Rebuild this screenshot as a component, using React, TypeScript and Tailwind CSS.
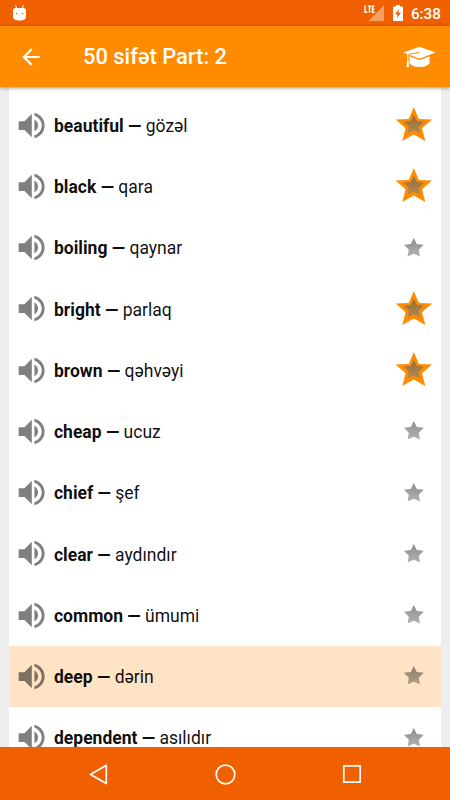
import React, { useState } from 'react';

interface Word {
  id: number;
  term: string;
  translation: string;
  starred: boolean;
}

const initialWords: Word[] = [
  { id: 1, term: 'beautiful', translation: 'gözəl', starred: true },
  { id: 2, term: 'black', translation: 'qara', starred: true },
  { id: 3, term: 'boiling', translation: 'qaynar', starred: false },
  { id: 4, term: 'bright', translation: 'parlaq', starred: true },
  { id: 5, term: 'brown', translation: 'qəhvəyi', starred: true },
  { id: 6, term: 'cheap', translation: 'ucuz', starred: false },
  { id: 7, term: 'chief', translation: 'şef', starred: false },
  { id: 8, term: 'clear', translation: 'aydındır', starred: false },
  { id: 9, term: 'common', translation: 'ümumi', starred: false },
  { id: 10, term: 'deep', translation: 'dərin', starred: false },
  { id: 11, term: 'dependent', translation: 'asılıdır', starred: false },
];

function StatusBar() {
  return (
    <div className="flex h-[26px] shrink-0 items-center bg-[#f06000] pl-[13px] pr-[9px]">
      <svg className="h-4 w-[13px]" viewBox="0 0 13 16" fill="none">
        <path d="M3.6 3.5L2.8.8M9.4 3.5l.8-2.7" stroke="#fff" strokeWidth="1" strokeLinecap="round" />
        <path d="M2.5 3h8c1.500 0 2.500 1 2.500 2.500V12c0 2.500-3 3.500-6.500 3.500S0 14.500 0 12V5.500C0 4 1 3 2.500 3z" fill="#fff" />
        <circle cx="3.700" cy="8.800" r=".8" fill="#f06000" />
        <circle cx="9.300" cy="8.800" r=".8" fill="#f06000" />
      </svg>
      <svg className="ml-auto h-4 w-5" viewBox="0 0 20 16">
        <path d="M20 0v16H4.500z" fill="#f7a066" />
        <path d="M0 0h11v8.500H0z" fill="#f06000" />
        <path d="M1 .5v6.700h2.400M3.800 1.100h3.400M5.500 1.100v6.700M10.600 1.100H8.400v6.100h2.200M8.400 4.200h2" stroke="#fff" strokeWidth="1.400" fill="none" />
      </svg>
      <svg className="ml-[9px] h-4 w-[10px]" viewBox="0 0 10 16">
        <path d="M3 0h4v1.500h2.200c.5 0 .8.300.8.800v12.900c0 .5-.3.800-.8.800H.8c-.5 0-.8-.3-.8-.8V2.300c0-.5.300-.8.800-.8H3z" fill="#fff" />
        <path d="M6 4L2 9.300h2.400L3.800 13.300 8 7.800H5.500z" fill="#f06000" />
      </svg>
      <span className="ml-2 pt-[3px] text-[15.300px] font-medium leading-none text-white">6:38</span>
    </div>
  );
}

function SpeakerIcon() {
  return (
    <svg className="h-[35px] w-[35px]" viewBox="0 0 24 24" fill="currentColor">
      <path d="M3.200 9v6h4l5 5V4l-5 5h-4zm13.300 3c0-1.770-1.020-3.290-2.500-4.030v8.050c1.480-.73 2.500-2.250 2.500-4.020zM14 3.230v2.060c2.890.86 5 3.540 5 6.710s-2.110 5.850-5 6.710v2.060c4.010-.91 7-4.490 7-8.770s-2.990-7.860-7-8.770z" />
    </svg>
  );
}

function StarIcon({ starred }: { starred: boolean }) {
  return (
    <svg className="h-10 w-10" viewBox="0 0 40 40">
      <defs>
        <linearGradient id="star-gray" x1="0" y1="0" x2="0" y2="1">
          <stop offset="0" stopColor="#000" stopOpacity=".45" />
          <stop offset="1" stopColor="#000" stopOpacity=".3" />
        </linearGradient>
        <linearGradient id="star-brown" x1="0" y1="0" x2="0" y2="1">
          <stop offset="0" stopColor="#8f6c40" />
          <stop offset="1" stopColor="#b58a4e" />
        </linearGradient>
      </defs>
      {starred && (
        <path d="M19.800 2L24.800 14l13.200.6-10 8.700 3.300 12.700-11.500-6.500L8.300 36l3.300-12.700-10-8.700L14.800 14z" fill="#ff8c00" />
      )}
      <path
        d="M19.800 10L22.800 15.900l6.900.9-4.900 4.900 1.200 6.700-6.200-2.700-6.200 2.700 1.200-6.700-4.900-4.900 6.900-.9z"
        fill={starred ? 'url(#star-brown)' : 'url(#star-gray)'}
      />
    </svg>
  );
}

function WordRow({ word, active, onSelect, onToggle }: {
  word: Word;
  active: boolean;
  onSelect: () => void;
  onToggle: () => void;
}) {
  return (
    <li
      onClick={onSelect}
      className={`flex h-[61.250px] shrink-0 items-center pl-[5px] pr-[7px] ${active ? 'bg-[#ffe3c5]' : ''}`}
    >
      <button type="button" className="text-black/50" aria-label="Listen">
        <SpeakerIcon />
      </button>
      <p className="ml-[5px] flex-1 pt-[1.400px] text-[17.500px] leading-6 text-black/95">
        <span className="font-bold">{word.term} — </span>
        {word.translation}
      </p>
      <button type="button" onClick={onToggle} aria-label="Favourite">
        <StarIcon starred={word.starred} />
      </button>
    </li>
  );
}

export default function App() {
  const [words, setWords] = useState(initialWords);
  const [activeId, setActiveId] = useState(10);

  const toggleStar = (id: number) => {
    setWords(words.map(w => (w.id === id ? { ...w, starred: !w.starred } : w)));
  };

  return (
    <div className="flex h-[800px] w-[450px] flex-col overflow-hidden bg-[#eeeeee] font-['Roboto',sans-serif]">
      <StatusBar />

      <header className="z-10 flex h-[61px] shrink-0 items-center bg-[#ff8c00] pl-[18px] pr-[14px] text-white shadow-[0_1px_4px_rgba(0,0,0,0.4)]">
        <button type="button" aria-label="Back">
          <svg className="h-[26px] w-[26px]" viewBox="0 0 24 24" fill="currentColor">
            <path d="M20 11H7.830l5.590-5.590L12 4l-8 8 8 8 1.410-1.410L7.830 13H20v-2z" />
          </svg>
        </button>
        <h1 className="ml-[39px] text-[21.900px] font-medium leading-none">50 sifət Part: 2</h1>
        <svg className="ml-auto mt-px h-[22px] w-[33px]" viewBox="0 0 33 22" fill="none">
          <path d="M16.500.8L32.500 6.500 16.500 12.800.5 6.500z" fill="#fff" />
          <path d="M6.500 10.300l10 3.900 10-3.900v7.200c-2 2.400-5.700 3.500-10 3.500s-8-1.100-10-3.500z" fill="#fff" />
          <path d="M16.500 6.300L5.500 8.300V11" stroke="#ff8c00" strokeWidth="1" />
          <path d="M4.300 8v5.500l-.8 7.500h2.600l-.8-7.500V8z" fill="#fff" />
        </svg>
      </header>

      <main className="min-h-0 flex-1 overflow-hidden px-[9px]">
        <ul className="flex flex-col bg-white pt-[7.500px]">
          {words.map(word => (
            <WordRow
              key={word.id}
              word={word}
              active={word.id === activeId}
              onSelect={() => setActiveId(word.id)}
              onToggle={() => toggleStar(word.id)}
            />
          ))}
        </ul>
      </main>

      <nav className="flex h-[53px] shrink-0 items-center justify-between bg-[#f06000] pl-[89px] pr-[88px] pt-px">
        <svg className="h-[21px] w-[19px]" viewBox="0 0 19 21" fill="none" stroke="#fff" strokeWidth="1.700" strokeLinejoin="round">
          <path d="M17.300 1.300v18.300L1.500 10.500z" />
        </svg>
        <svg className="h-[21px] w-[21px]" viewBox="0 0 21 21" fill="none" stroke="#fff" strokeWidth="1.700">
          <circle cx="10.500" cy="10.500" r="9.300" />
        </svg>
        <svg className="h-5 w-5" viewBox="0 0 20 20" fill="none" stroke="#fff" strokeWidth="1.700" strokeLinejoin="round">
          <path d="M1.800 1.800h16.400v16.400H1.800z" />
        </svg>
      </nav>
    </div>
  );
}
